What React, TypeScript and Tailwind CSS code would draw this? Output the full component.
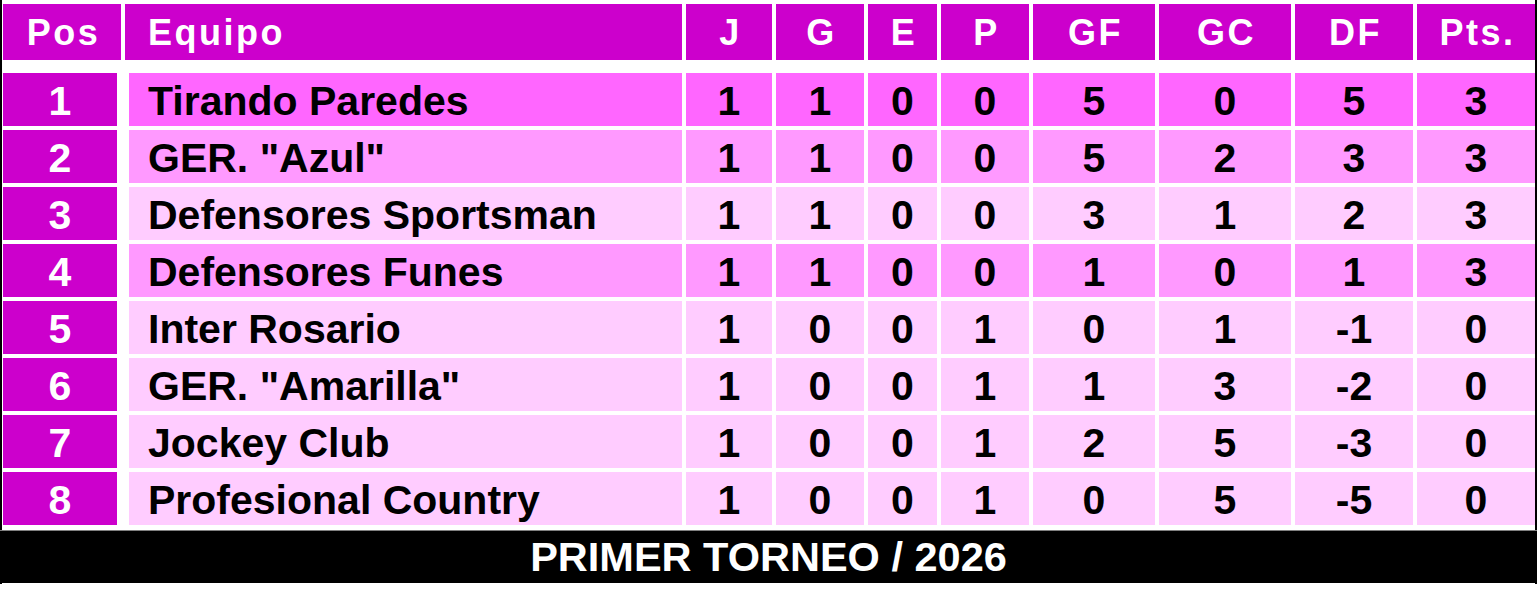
const rows = [
  { pos: 1, team: 'Tirando Paredes', j: 1, g: 1, e: 0, p: 0, gf: 5, gc: 0, df: 5, pts: 3, bg: 'bg-[#ff66ff]' },
  { pos: 2, team: 'GER. "Azul"', j: 1, g: 1, e: 0, p: 0, gf: 5, gc: 2, df: 3, pts: 3, bg: 'bg-[#ff99ff]' },
  { pos: 3, team: 'Defensores Sportsman', j: 1, g: 1, e: 0, p: 0, gf: 3, gc: 1, df: 2, pts: 3, bg: 'bg-[#ffccff]' },
  { pos: 4, team: 'Defensores Funes', j: 1, g: 1, e: 0, p: 0, gf: 1, gc: 0, df: 1, pts: 3, bg: 'bg-[#ff99ff]' },
  { pos: 5, team: 'Inter Rosario', j: 1, g: 0, e: 0, p: 1, gf: 0, gc: 1, df: -1, pts: 0, bg: 'bg-[#ffccff]' },
  { pos: 6, team: 'GER. "Amarilla"', j: 1, g: 0, e: 0, p: 1, gf: 1, gc: 3, df: -2, pts: 0, bg: 'bg-[#ffccff]' },
  { pos: 7, team: 'Jockey Club', j: 1, g: 0, e: 0, p: 1, gf: 2, gc: 5, df: -3, pts: 0, bg: 'bg-[#ffccff]' },
  { pos: 8, team: 'Profesional Country', j: 1, g: 0, e: 0, p: 1, gf: 0, gc: 5, df: -5, pts: 0, bg: 'bg-[#ffccff]' },
]

// widths of the stat columns, J .. Pts.
const statCols = 'h-full grid grid-cols-[86px_88px_69px_88px_122px_132px_118px_118px] gap-x-[4px]'
const heads = ['J', 'G', 'E', 'P', 'GF', 'GC', 'DF', 'Pts.']

export default function App() {
  return (
    <div className="w-[1537px] h-[589px] bg-white font-['Liberation_Sans',Arial,sans-serif] font-bold leading-none">
      <div className="h-[584px] border-l-2 border-r-2 border-black pl-[1px] pt-[4px] flex flex-col">
        {/* header */}
        <div className="flex gap-x-[4px] h-[56px] shrink-0 text-white text-[36px] tracking-[2.5px]">
          <div className="w-[118px] bg-[#cc00cc] flex items-center justify-center pl-[3px] pt-[2px]">Pos</div>
          <div className="w-[557px] bg-[#cc00cc] flex items-center pl-[23px] pt-[2px]">Equipo</div>
          <div className={statCols}>
            {heads.map(h => (
              <div key={h} className="bg-[#cc00cc] flex items-center justify-center pl-[3px] pt-[2px]">{h}</div>
            ))}
          </div>
        </div>

        {/* rows */}
        <div className="mt-[13px] flex flex-col gap-y-[4px] text-[41px]">
          {rows.map(r => (
            <div key={r.pos} className="flex h-[53px] shrink-0">
              <div className="w-[114px] bg-[#cc00cc] text-white flex items-center justify-center pt-[3px]">{r.pos}</div>
              <div className={`ml-[12px] mr-[4px] w-[553px] ${r.bg} text-black flex items-center pl-[19px] pt-[3px] whitespace-nowrap`}>{r.team}</div>
              <div className={statCols}>
                {[r.j, r.g, r.e, r.p, r.gf, r.gc, r.df, r.pts].map((v, i) => (
                  <div key={i} className={`${r.bg} text-black flex items-center justify-center pt-[3px]`}>{v}</div>
                ))}
              </div>
            </div>
          ))}
        </div>

        {/* footer */}
        <div className="mt-[5px] -ml-[3px] -mr-[2px] h-[53px] shrink-0 bg-black border-t border-[#808080] text-white text-[41.5px] flex items-center justify-center">
          PRIMER TORNEO / 2026
        </div>
      </div>
    </div>
  )
}
